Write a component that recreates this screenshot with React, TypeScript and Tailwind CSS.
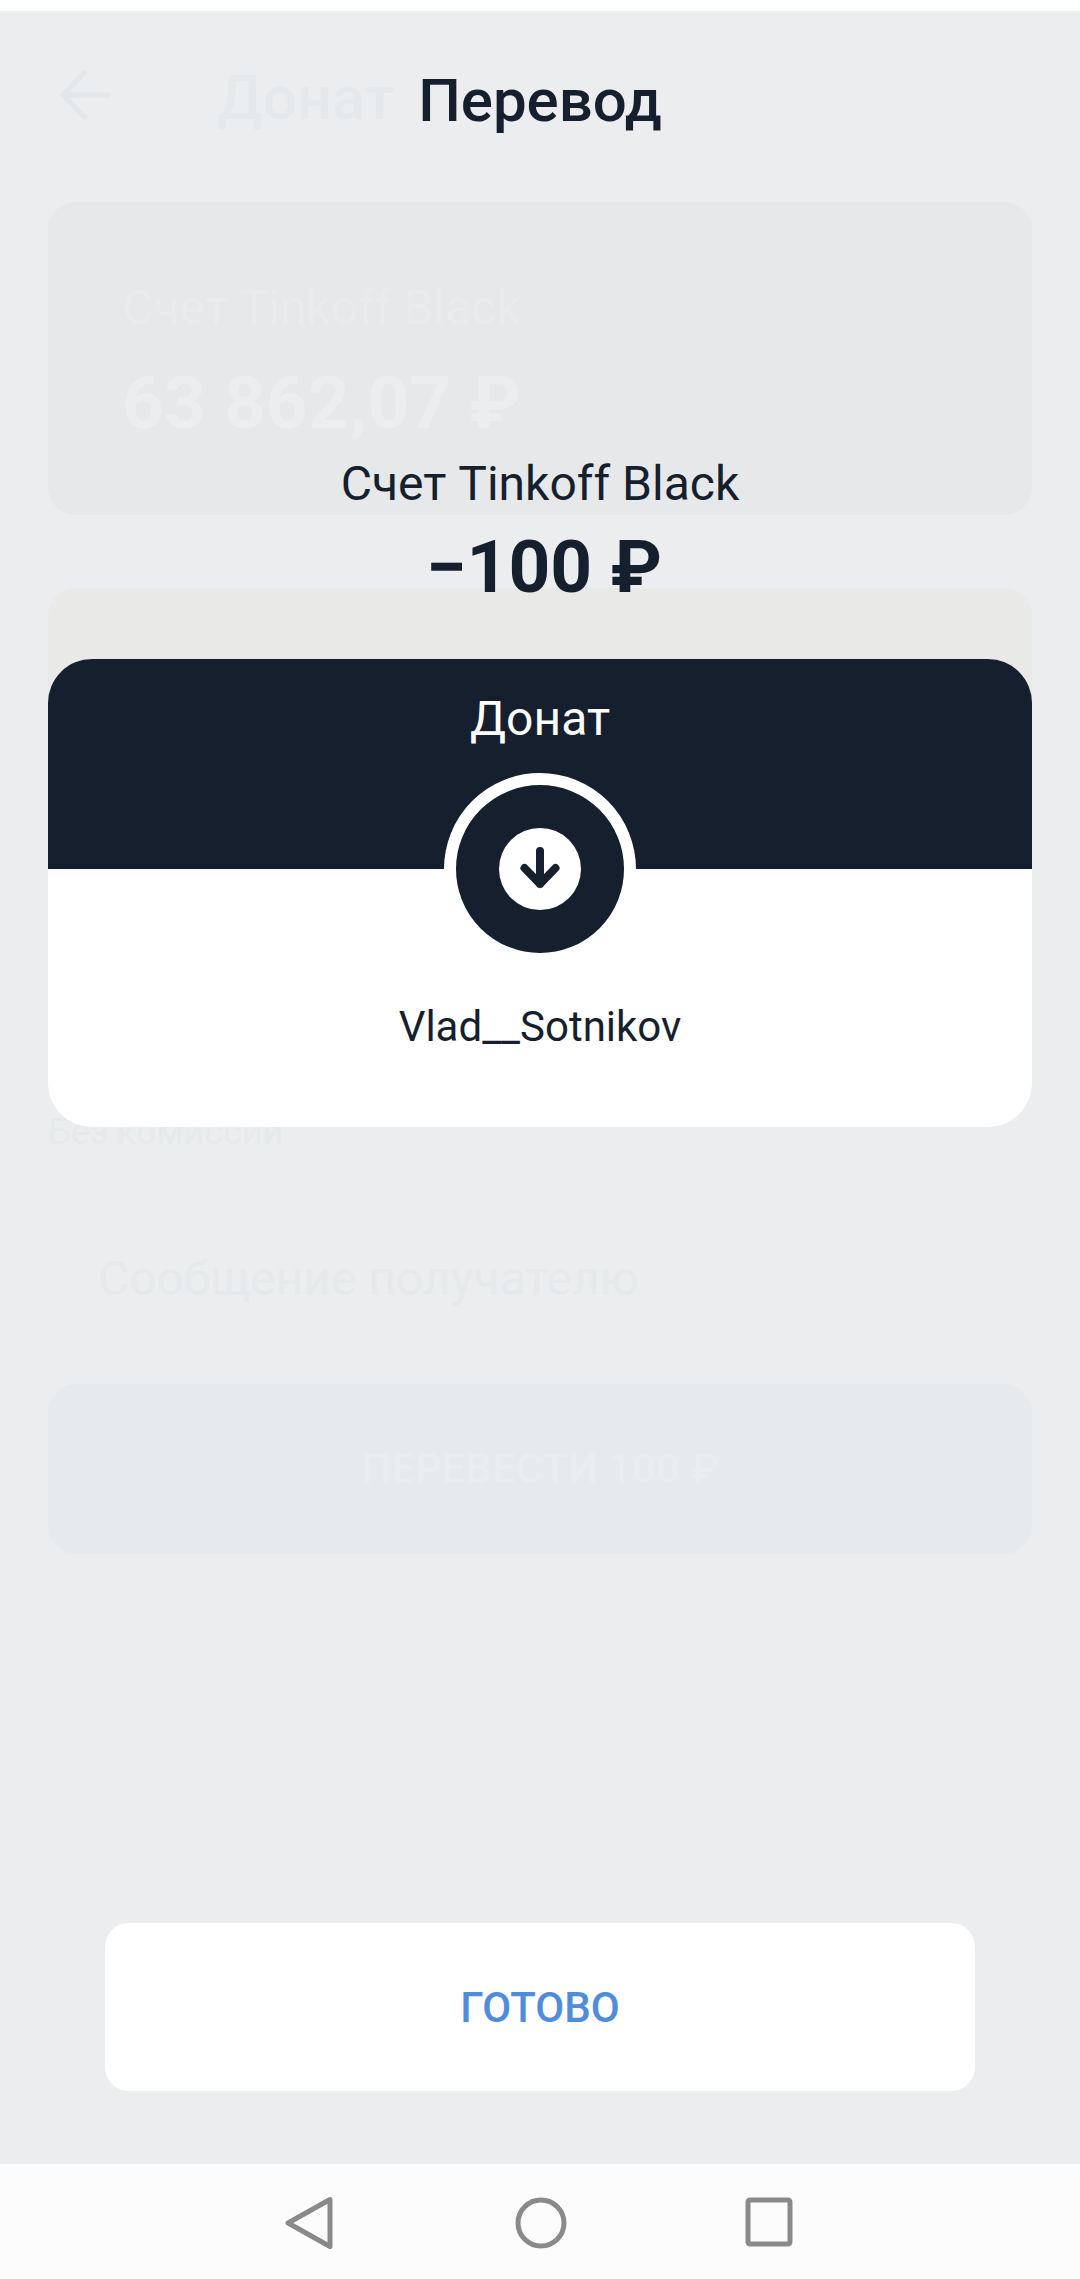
const fontRoboto = "font-['Roboto',sans-serif]";

// Страница под оверлеем: почти сливается с фоном
function FadedPage() {
  return (
    <div className="flex h-full flex-col px-12">
      <div className="flex h-[191px] items-start pt-[52px]">
        <svg width="52" height="56" viewBox="0 0 52 56" fill="none" stroke="#e3e7ea" strokeWidth="5" className="ml-[12px] mt-[4px]">
          <path d="M50 28H4M26 4L3 28l23 24" />
        </svg>
        <span className="ml-[105px] text-[61px] font-medium leading-[70px] text-[#e6e9eb]">Донат</span>
      </div>

      <div className="flex h-[313px] flex-col rounded-[28px] bg-[#e6e8ea] pl-[74px] pt-[76px]">
        <span className="text-[48px] leading-[60px] text-[#e9ebed]">Счет Tinkoff Black</span>
        <span className="mt-[25px] text-[73px] font-bold leading-[80px] text-[#ebedee]">63 862,07 ₽</span>
      </div>

      <div className="mt-[73px] h-[500px] rounded-[28px] bg-[#e9eae8]" />

      <span className="mt-[22px] text-[36px] leading-[44px] text-[#e6e9ea]">Без комиссии</span>

      <span className="ml-[50px] mt-[95px] text-[48px] leading-[60px] text-[#e6e9eb]">Сообщение получателю</span>

      <div className="mt-[75px] flex h-[170px] items-center justify-center rounded-[28px] bg-[#e6eaec]">
        <span className="text-[42px] font-medium leading-[50px] text-[#eaecee]">ПЕРЕВЕСТИ 100 ₽</span>
      </div>
    </div>
  );
}

function TransferCard() {
  return (
    <div className="relative mt-[52px] h-[468px] w-[984px] overflow-hidden rounded-[44px] bg-white">
      <div className="flex h-[210px] justify-center bg-[#151f2d] pt-[30px]">
        <span className="text-[48px] leading-[60px] text-white">Донат</span>
      </div>
      <div className="absolute left-1/2 top-[114px] flex h-[192px] w-[192px] -translate-x-1/2 items-center justify-center rounded-full border-[12px] border-white bg-[#151f2d]">
        <div className="flex h-[82px] w-[82px] items-center justify-center rounded-full bg-white">
          <svg width="82" height="82" viewBox="0 0 82 82" fill="none" stroke="#151f2d" strokeWidth="8" strokeLinecap="round" strokeLinejoin="round">
            <path d="M41 23v33M25.5 40L41 56l15.5-16" />
          </svg>
        </div>
      </div>
      <div className="mt-[130px] text-center text-[42px] leading-[56px] text-[#151f2d]">Vlad__Sotnikov</div>
    </div>
  );
}

function NavBar() {
  return (
    <div className="flex h-[115px] items-start justify-center bg-[#fcfcfc] pt-[31px]">
      <svg width="52" height="56" viewBox="0 0 52 56" fill="none" stroke="#8a8a8a" strokeWidth="5" strokeLinejoin="round" className="ml-[-3px]">
        <path d="M47 4.5v47L5 28z" />
      </svg>
      <svg width="56" height="56" viewBox="0 0 56 56" fill="none" stroke="#8a8a8a" strokeWidth="5" className="ml-[178px]">
        <circle cx="28" cy="28" r="23" />
      </svg>
      <svg width="52" height="56" viewBox="0 0 52 56" fill="none" stroke="#8a8a8a" strokeWidth="5" strokeLinejoin="round" className="ml-[174px]">
        <rect x="5" y="5" width="42" height="44" rx="2" />
      </svg>
    </div>
  );
}

export default function App() {
  return (
    <div className={`flex h-[2279px] w-[1080px] flex-col overflow-hidden bg-white pt-[11px] ${fontRoboto}`}>
      <div className="relative flex-1 bg-[#ebedee]">
        <FadedPage />

        {/* Оверлей успешного перевода */}
        <div className="absolute inset-0 flex flex-col items-center">
          <h1 className="mt-[55px] text-[60px] font-medium leading-[70px] text-[#151f2d]">Перевод</h1>
          <p className="mt-[318px] text-[48px] leading-[60px] text-[#151f2d]">Счет Tinkoff Black</p>
          <p className="ml-[8px] mt-[13px] text-[73px] font-bold leading-[80px] text-[#151f2d]">−100 ₽</p>
          <TransferCard />
          <button className="mt-[796px] flex h-[168px] w-[870px] items-center justify-center rounded-[24px] bg-white text-[42px] font-medium text-[#4f8cdc]">
            ГОТОВО
          </button>
        </div>
      </div>
      <NavBar />
    </div>
  );
}
